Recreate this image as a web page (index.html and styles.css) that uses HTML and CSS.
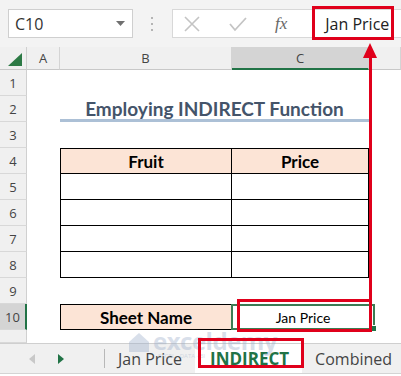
FILE: index.html
```html
<!DOCTYPE html>
<html lang="en">
<head>
    <meta charset="utf-8">
    <title>Employing INDIRECT Function</title>
    <link rel="stylesheet" href="styles.css">
</head>
<body>
    <div id="app">
        <div class="toolbar">
            <div class="namebox">
                <span>C10</span>
                <svg class="caret" width="9" height="5" viewBox="0 0 9 5"><path d="M0 0h9L4.5 5z" fill="#707070"/></svg>
            </div>
            <svg class="dots" width="4" height="16" viewBox="0 0 4 16">
                <rect x="1" y="1" width="2" height="2" fill="#b4b4b4"/>
                <rect x="1" y="7" width="2" height="2" fill="#b4b4b4"/>
                <rect x="1" y="13" width="2" height="2" fill="#b4b4b4"/>
            </svg>
            <div class="formula">
                <svg class="ico x" width="18" height="18" viewBox="0 0 18 18"><path d="M2 2l14 14M16 2L2 16" stroke="#c4c4c4" stroke-width="1.6" fill="none"/></svg>
                <svg class="ico check" width="20" height="16" viewBox="0 0 20 16"><path d="M2 8l5 6L18 2" stroke="#c4c4c4" stroke-width="1.8" fill="none"/></svg>
                <i class="fx">fx</i>
                <span class="ftext">Jan Price</span>
            </div>
        </div>

        <div class="sheet">
            <div class="corner"><svg width="14" height="13" viewBox="0 0 14 13"><path d="M14 0v13H0z" fill="#2d7a45"/></svg></div>
            <div class="ch">A</div>
            <div class="ch">B</div>
            <div class="ch sel">C</div>
            <div class="ch"></div>

            <div class="rh">1</div><div></div><div></div><div></div><div></div>
            <div class="rh">2</div><div></div><div class="title">Employing INDIRECT Function</div><div></div>
            <div class="rh">3</div><div></div><div></div><div></div><div></div>
            <div class="rh">4</div><div></div><div class="t l top hd">Fruit</div><div class="t top hd">Price</div><div></div>
            <div class="rh">5</div><div></div><div class="t l"></div><div class="t"></div><div></div>
            <div class="rh">6</div><div></div><div class="t l"></div><div class="t"></div><div></div>
            <div class="rh">7</div><div></div><div class="t l"></div><div class="t"></div><div></div>
            <div class="rh">8</div><div></div><div class="t l"></div><div class="t"></div><div></div>
            <div class="rh">9</div><div></div><div></div><div></div><div></div>
            <div class="rh rsel">10</div><div></div><div class="t l top hd">Sheet Name</div><div class="active">Jan Price</div><div></div>
            <div class="rh"></div><div></div><div></div><div></div><div></div>
        </div>

        <div class="tabs">
            <svg class="nav" width="6" height="10" viewBox="0 0 6 10"><path d="M6 0v10L0 5z" fill="#c8c8c8"/></svg>
            <svg class="nav next" width="6" height="10" viewBox="0 0 6 10"><path d="M0 0v10l6-5z" fill="#217346"/></svg>
            <span class="sep"></span>
            <span class="tab">Jan Price</span>
            <span class="tab on">INDIRECT</span>
            <span class="tab">Combined</span>
        </div>
        <div class="foot"></div>

        <div class="mark">
            <svg width="22" height="20" viewBox="0 0 22 20"><path d="M1 10L11 1l10 9v10H1z" fill="#9fb0cc"/></svg>
            <span class="mname">exceldemy</span>
            <span class="msub">EXCEL · DATA · BI</span>
        </div>

        <div class="box box-top"></div>
        <div class="box box-cell"></div>
        <div class="box box-tab"></div>
        <div class="arrow-line"></div>
        <svg class="arrow-head" width="14" height="15" viewBox="0 0 14 15"><path d="M7 0l7 15H0z" fill="#e0001b"/></svg>
    </div>
</body>
</html>
```

FILE: styles.css
```css
body {
    margin: 0;
    background: #fff;
    font-family: "Open Sans", sans-serif;
    color: #333;
}
#app {
    position: relative;
    width: 401px;
    height: 376px;
    overflow: hidden;
}

/* formula bar */
.toolbar {
    height: 47px;
    background: #f3f3f3;
    display: flex;
    align-items: flex-start;
    padding-top: 9px;
    box-sizing: border-box;
}
.namebox {
    margin-left: 8px;
    width: 125px;
    height: 29px;
    box-sizing: border-box;
    background: #fff;
    border: 1px solid #cfcfcf;
    display: flex;
    align-items: center;
    justify-content: space-between;
    padding: 0 6px 0 6px;
    font-size: 16px;
    color: #333;
}
.caret {
    margin-right: 1px;
}
.dots {
    margin: 7px 0 0 17px;
}
.formula {
    margin-left: 18px;
    flex: 1;
    height: 29px;
    box-sizing: border-box;
    background: #fff;
    border: 1px solid #d8d8d8;
    border-right: none;
    display: flex;
    align-items: center;
    white-space: nowrap;
}
.ico.x {
    margin-left: 10px;
}
.ico.check {
    margin-left: 27px;
}
.fx {
    margin-left: 27px;
    font-family: "Liberation Serif", serif;
    font-size: 17px;
    color: #666;
    font-style: italic;
}
.ftext {
    margin-left: 38px;
    font-size: 16px;
    color: #222;
}

/* grid */
.sheet {
    display: grid;
    grid-template-columns: 27px 33px 172px 137px 1fr;
    grid-template-rows: 23px repeat(10, 26px) 13px;
    font-family: "Lato", sans-serif;
    color: #000;
}
.sheet > div {
    box-sizing: border-box;
}
.corner {
    background: #f0f0f0;
    border-right: 1px solid #d0d0d0;
    border-bottom: 1px solid #c8c8c8;
    display: flex;
    align-items: flex-end;
    justify-content: flex-end;
    padding: 0 4px 3px 0;
}
.ch {
    background: #f0f0f0;
    border-right: 1px solid #d4d4d4;
    border-bottom: 1px solid #c8c8c8;
    font-family: "Open Sans", sans-serif;
    font-size: 13px;
    color: #444;
    display: flex;
    align-items: center;
    justify-content: center;
}
.ch.sel {
    background: #d4d4d4;
    border-bottom: 2px solid #217346;
}
.rh {
    background: #f0f0f0;
    border-right: 1px solid #d0d0d0;
    border-bottom: 1px solid #d8d8d8;
    font-family: "Open Sans", sans-serif;
    font-size: 13px;
    color: #444;
    display: flex;
    align-items: center;
    justify-content: center;
}
.rh.rsel {
    background: #d4d4d4;
    border-right: 2px solid #217346;
}
.title {
    grid-column: span 2;
    border-bottom: 3px solid #acc0d6;
    color: #44546a;
    font-weight: bold;
    font-size: 19px;
    display: flex;
    align-items: center;
    justify-content: center;
    padding-top: 2px;
}
.t {
    border-right: 1px solid #000;
    border-bottom: 1px solid #000;
}
.t.l {
    border-left: 1px solid #000;
}
.t.top {
    border-top: 1px solid #000;
}
.hd {
    background: #fce4d6;
    font-weight: bold;
    font-size: 17px;
    display: flex;
    align-items: center;
    justify-content: center;
}
.active {
    border: 2px solid #3d7b53;
    margin: 0 -6px 0 -1px;
    font-size: 14px;
    display: flex;
    align-items: center;
    justify-content: center;
    position: relative;
}
.active::after {
    content: "";
    position: absolute;
    right: -4px;
    bottom: -4px;
    width: 5px;
    height: 5px;
    background: #217346;
    border: 1px solid #fff;
}

/* sheet tabs */
.tabs {
    height: 29px;
    background: #f0f0f0;
    border-top: 1px solid #cfcfcf;
    border-bottom: 1px solid #d4d4d4;
    display: flex;
    align-items: center;
    font-size: 16px;
    color: #444;
    white-space: nowrap;
}
.tabs > * {
    flex-shrink: 0;
}
.nav {
    margin-left: 29px;
}
.nav.next {
    margin-left: 23px;
}
.sep {
    width: 1px;
    height: 19px;
    background: #b8b8b8;
    margin-left: 40px;
}
.tab {
    padding: 0 13px;
    height: 100%;
    display: flex;
    align-items: center;
}
.tab.on {
    background: #fff;
    color: #217346;
    font-weight: bold;
    font-size: 17px;
    padding: 0 13px 0 15px;
}
.foot {
    height: 4px;
    background: #fff;
}

/* watermark */
.mark {
    position: absolute;
    left: 128px;
    top: 328px;
    width: 120px;
    height: 36px;
    opacity: 0.4;
}
.mark svg {
    position: absolute;
    left: 0;
    top: 4px;
}
.mname {
    position: absolute;
    left: 25px;
    top: -4px;
    font-size: 24px;
    font-weight: bold;
    color: #9fb0cc;
    letter-spacing: -0.5px;
}
.msub {
    position: absolute;
    left: 30px;
    top: 24px;
    font-size: 6px;
    color: #9fb0cc;
}

/* red annotations */
.box {
    position: absolute;
    border: 3px solid #e0001b;
    box-sizing: border-box;
}
.box-top {
    left: 312px;
    top: 6px;
    width: 82px;
    height: 34px;
}
.box-cell {
    left: 237px;
    top: 299px;
    width: 135px;
    height: 33px;
}
.box-tab {
    left: 198px;
    top: 338px;
    width: 106px;
    height: 30px;
}
.arrow-line {
    position: absolute;
    left: 369px;
    top: 56px;
    width: 3px;
    height: 245px;
    background: #e0001b;
}
.arrow-head {
    position: absolute;
    left: 363px;
    top: 43px;
}
```
